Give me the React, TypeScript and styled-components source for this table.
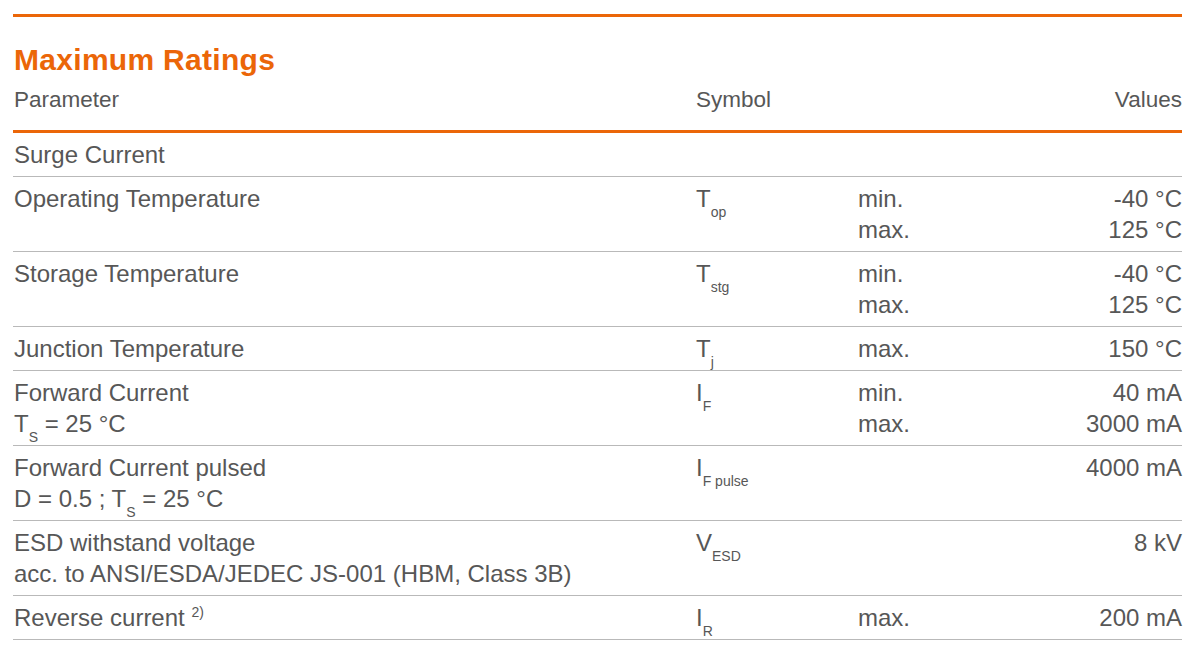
import React from "react";
import styled, { createGlobalStyle } from "styled-components";

const Global = createGlobalStyle`
  html, body { margin: 0; padding: 0; background: #ffffff; }
  body { font-family: "Liberation Sans", Arial, Helvetica, sans-serif; color: #575757; }
`;

const ORANGE = "#eb6608";

const Page = styled.div`
  padding: 14px 18px 0 13px;
  width: 1169px;
`;

const Sheet = styled.section`
  border-top: 3px solid ${ORANGE};
`;

const Title = styled.h2`
  margin: 25px 0 0 1px;
  font-size: 30px;
  line-height: 36px;
  font-weight: 700;
  letter-spacing: 0.3px;
  color: ${ORANGE};
`;

const Row = styled.div<{ $head?: boolean }>`
  display: grid;
  grid-template-columns: 682px 162px 1fr auto;
  padding: ${(p) => (p.$head ? "6px 0 15px 1px" : "6px 0 6px 1px")};
  border-bottom: ${(p) => (p.$head ? `3px solid ${ORANGE}` : "1px solid #b9b9b9")};
  font-size: ${(p) => (p.$head ? "22.5px" : "24px")};
  line-height: 31px;
`;

const Cell = styled.div<{ $right?: boolean }>`
  display: flex;
  flex-direction: column;
  align-items: ${(p) => (p.$right ? "flex-end" : "flex-start")};
  white-space: nowrap;
`;

const Sub = styled.sub`
  font-size: 14px;
  vertical-align: -10px;
  line-height: 0;
`;

const Sup = styled.sup`
  font-size: 14px;
  vertical-align: 9px;
  line-height: 0;
`;

type Data = {
  param: React.ReactNode[];
  sym?: React.ReactNode;
  cond?: string[];
  vals?: string[];
};

const sym = (base: string, sub: string) => (
  <>
    {base}
    <Sub>{sub}</Sub>
  </>
);

const rows: Data[] = [
  { param: ["Surge Current"] },
  { param: ["Operating Temperature"], sym: sym("T", "op"), cond: ["min.", "max."], vals: ["-40 °C", "125 °C"] },
  { param: ["Storage Temperature"], sym: sym("T", "stg"), cond: ["min.", "max."], vals: ["-40 °C", "125 °C"] },
  { param: ["Junction Temperature"], sym: sym("T", "j"), cond: ["max."], vals: ["150 °C"] },
  {
    param: ["Forward Current", <>T<Sub>S</Sub> = 25 °C</>],
    sym: sym("I", "F"),
    cond: ["min.", "max."],
    vals: ["40 mA", "3000 mA"],
  },
  {
    param: ["Forward Current pulsed", <>D = 0.5 ; T<Sub>S</Sub> = 25 °C</>],
    sym: sym("I", "F pulse"),
    vals: ["4000 mA"],
  },
  {
    param: ["ESD withstand voltage", "acc. to ANSI/ESDA/JEDEC JS-001 (HBM, Class 3B)"],
    sym: sym("V", "ESD"),
    vals: ["8 kV"],
  },
  {
    param: [<>Reverse current <Sup>2)</Sup></>],
    sym: sym("I", "R"),
    cond: ["max."],
    vals: ["200 mA"],
  },
];

export default function App() {
  return (
    <>
      <Global />
      <Page>
        <Sheet>
          <Title>Maximum Ratings</Title>
          <Row $head>
            <Cell>Parameter</Cell>
            <Cell>Symbol</Cell>
            <Cell />
            <Cell $right>Values</Cell>
          </Row>
          {rows.map((r, i) => (
            <Row key={i}>
              <Cell>
                {r.param.map((p, j) => (
                  <span key={j}>{p}</span>
                ))}
              </Cell>
              <Cell>{r.sym && <span>{r.sym}</span>}</Cell>
              <Cell>
                {(r.cond ?? []).map((c) => (
                  <span key={c}>{c}</span>
                ))}
              </Cell>
              <Cell $right>
                {(r.vals ?? []).map((v) => (
                  <span key={v}>{v}</span>
                ))}
              </Cell>
            </Row>
          ))}
        </Sheet>
      </Page>
    </>
  );
}
